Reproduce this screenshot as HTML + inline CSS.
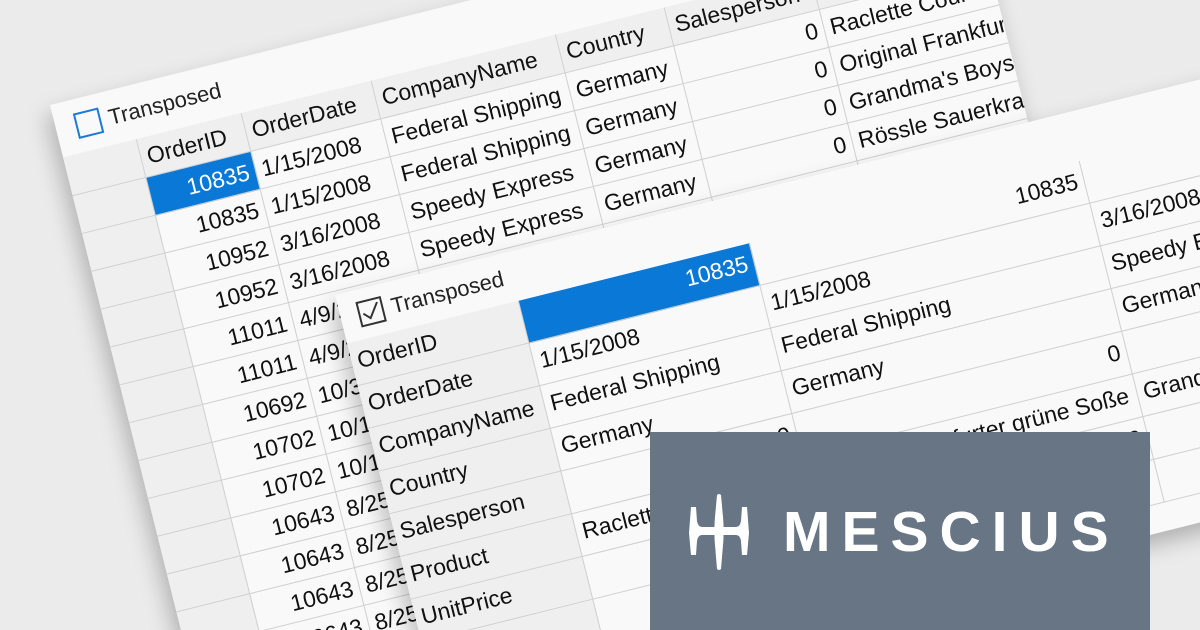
<!DOCTYPE html>
<html><head><meta charset="utf-8"><style>
*{margin:0;padding:0;box-sizing:border-box}
html,body{width:1200px;height:630px;overflow:hidden}
body{background:#ebebeb;font-family:"Liberation Sans",sans-serif;position:relative}
#wrap{position:absolute;left:0;top:0;width:1200px;height:630px;overflow:hidden}
.panel{position:absolute;background:#f9f9f9;transform-origin:0 0;transform:rotate(-14deg);box-shadow:-6px 10px 22px rgba(0,0,0,.25);overflow:hidden}
.c{position:absolute;border-right:1px solid #cfcfcf;border-bottom:1px solid #cfcfcf;font-size:23px;color:#111;white-space:nowrap;overflow:hidden;padding:7px 6px;line-height:25px}
.h{background:#efefef}
.r{text-align:right}
.sel{background:#0a78d7;color:#fff}
.cb{position:absolute;font-size:22px;color:#222;display:flex;align-items:center}
.box{width:26px;height:26px;border:2px solid #1a7ad6;margin-right:8px;display:inline-block}
.box2{width:26px;height:26px;border:2px solid #333;margin-right:8px;display:inline-block;position:relative}
</style></head><body>
<div id="wrap">
<div class="panel" style="left:50px;top:105px;width:945px;height:640px" id="back"></div>
<div class="panel" style="left:335px;top:295px;width:1000px;height:430px" id="front"></div>

<div style="position:absolute;left:650px;top:432px;width:500px;height:198px;background:#687585">
<svg style="position:absolute;left:38px;top:61px" width="62" height="78" viewBox="0 0 62 78">
<path d="M29 2 Q31 0 33 2 L35 24 Q36 36 35 38 Q36 42 35 52 L33 76 Q31 78 29 76 L27 52 Q26 42 27 38 Q26 36 27 24Z" fill="#fff"/>
<path d="M3 14 L8 14 L9 28 Q10 34 14 34 L18 34 L18 42 L14 42 Q10 42 9 48 L8 62 L3 62 L1 40Z" fill="#fff"/>
<path d="M59 14 L54 14 L53 28 Q52 34 48 34 L44 34 L44 42 L48 42 Q52 42 53 48 L54 62 L59 62 L61 40Z" fill="#fff"/>
<rect x="16" y="34" width="30" height="8" fill="#fff"/>
</svg>
<div style="position:absolute;left:133px;top:68px;font-size:57px;font-weight:bold;color:#fff;letter-spacing:11px;line-height:64px">MESCIUS</div>
</div>
</div>
<script>
function add(p,x,y,w,h,t,cls){var d=document.createElement('div');d.className='c '+(cls||'');d.style.left=x+'px';d.style.top=y+'px';d.style.width=w+'px';d.style.height=h+'px';d.textContent=t;p.appendChild(d);}
var b=document.getElementById('back');
var cb=document.createElement('div');cb.className='cb';cb.style.left='20px';cb.style.top='14px';cb.innerHTML='<span class="box"></span>Transposed';b.appendChild(cb);
var cols=[76,108,134,190,112,150,220];var names=['','OrderID','OrderDate','CompanyName','Country','Salesperson','Product'];
var ids=['10835','10835','10952','10952','11011','11011','10692','10702','10702','10643','10643','10643','10643','10643'];
var dates=['1/15/2008','1/15/2008','3/16/2008','3/16/2008','4/9/2008','4/9/2008','10/3/2007','10/13/2007','10/13/2007','8/25/2007','8/25/2007','8/25/2007','8/25/2007','8/25/2007'];
var comp=['Federal Shipping','Federal Shipping','Speedy Express','Speedy Express','','','','','','','','','',''];
var ctry=['Germany','Germany','Germany','Germany','','','','','','','','','',''];
var sp=['0','0','0','0','','','','','','','','','',''];
var prod=['Raclette Courdavault','Original Frankfurter','Grandma\'s Boysenberry','Rössle Sauerkraut','','','','','','','','','',''];
var x=0,top0=54,hh=40,rh=39;
for(var c=0;c<cols.length;c++){add(b,x,top0,cols[c],hh,names[c],'h');x+=cols[c];}
for(var r=0;r<13;r++){var y=top0+hh+r*rh;x=0;
 var vals=['',ids[r],dates[r],comp[r],ctry[r],sp[r],prod[r]];
 for(c=0;c<cols.length;c++){var cl=c==0?'h':'';if(c==1||c==5)cl+=' r';if(c==1&&r==0)cl+=' sel';add(b,x,y,cols[c],rh,vals[c],cl);x+=cols[c];}}
var f=document.getElementById('front');
var cb2=document.createElement('div');cb2.className='cb';cb2.style.left='18px';cb2.style.top='12px';cb2.innerHTML='<span class="box2"><svg width="22" height="22" style="position:absolute;left:0;top:0"><path d="M3 11 L9 17 L19 3" stroke="#333" stroke-width="2" fill="none"/></svg></span>Transposed';f.appendChild(cb2);
var labs=['OrderID','OrderDate','CompanyName','Country','Salesperson','Product','UnitPrice','Quantity'];
var c1=['10835','1/15/2008','Federal Shipping','Germany','0','Raclette Courdavault','55.00',''];
var c2=['10835','1/15/2008','Federal Shipping','Germany','0','Original Frankfurter grüne Soße','13.00',''];
var c3=['10952','3/16/2008','Speedy Express','Germany','0','Grandma\'s Boysenberry','25.00',''];
var fc=[177,238,340,300];var fy=50,frh=44;
for(r=0;r<8;r++){var yy=fy+r*frh;x=0;var vv=[labs[r],c1[r],c2[r],c3[r]];
 for(c=0;c<4;c++){var cl2=c==0?'h':'';if((r==0||r==4||r==6)&&c>0)cl2+=' r';if(r==0&&c==1)cl2+=' sel';add(f,x,yy,fc[c],frh,vv[c],cl2);x+=fc[c];}}
</script>
</body></html>
